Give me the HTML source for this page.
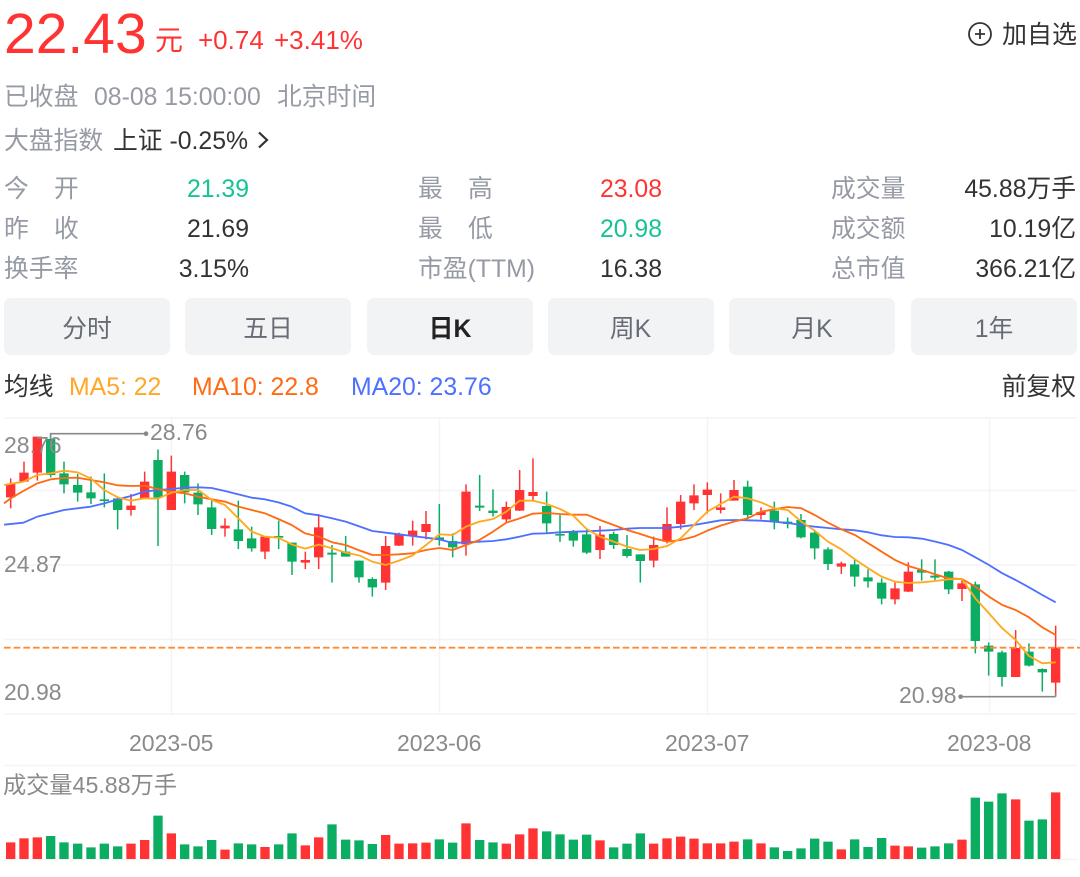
<!DOCTYPE html>
<html lang="zh-CN"><head><meta charset="utf-8"><title>22.43</title>
<style>
html,body{margin:0;padding:0;background:#fff}
#p{position:relative;width:1080px;height:877px;overflow:hidden;background:#fff;font-family:"Liberation Sans","Noto Sans CJK SC",sans-serif;font-size:24.8px;color:#333;filter:blur(.3px)}
#p span,#p div.b{position:absolute;white-space:pre;line-height:30px;height:30px}
.g{color:#969aa4}.r{color:#ff3333}.t{color:#17c396}
.b{background:#f2f3f5;border-radius:7px;top:298px;height:57px!important;line-height:63.5px!important;width:166px;text-align:center;color:#666b75}
.x{font-size:23px;color:#8a8a8a}
svg{position:absolute;left:0;top:0}
</style></head><body><div id="p">
<svg width="1080" height="877" viewBox="0 0 1080 877" fill="none">
<g stroke="#f4f4f5" stroke-width="1.5">
<path d="M4 418H1077M4 490.5H1077M4 565H1077M4 639.5H1077M4 714H1077M4 765.5H1077M4 859.5H1077"/>
<path d="M171.5 418V714M439.5 418V714M707.5 418V714M989.5 418V714"/>
</g>
<g transform="translate(0 410) scale(.33333)">
<path stroke="#ff3333" stroke-width="4.5" d="M32 205V295M72 155V215M112 80V212M393 252V317M434 185V265M514 137V300M675 325V380M795 380V447M916 425V477M956 312V477M1157 378V540M1197 368V408M1238 332V407M1278 303V388M1398 223V437M1519 275V338M1559 180V303M1599 145V272M1800 348V447M1961 380V472M2001 292V400M2042 255V358M2082 223V300M2122 217V310M2162 250V310M2202 210V272M2283 292V328M2524 455V492M2685 518V583M2725 457V546M2886 510V573M3047 660V801M3167 647V860"/>
<path stroke="#ff3333" stroke-width="28" d="M32 222V262M72 188V215M112 80V188M393 287V300M434 215V265M514 185V300M675 347V355M795 380V425M916 450V458M956 352V442M1157 408V518M1197 372V407M1238 362V378M1278 342V366M1398 245V403M1519 291V328M1559 240V302M1599 246V258M1800 374V420M1961 405V452M2001 342V395M2042 275V342M2082 256V280M2122 239V255M2162 292V300M2202 240V272M2283 306V315M2524 460V470M2685 535V568M2725 485V545M2886 520V537M3047 714V801M3167 713V818"/>
<path stroke="#0bad62" stroke-width="4.5" d="M152 70V202M192 155V250M233 192V275M273 200V282M313 190V292M353 260V358M474 118V408M554 185V280M594 220V315M635 270V375M715 272V417M755 350V425M836 332V417M876 398V495M996 405V518M1037 378V440M1077 452V518M1117 502V560M1318 282V407M1358 370V442M1439 195V303M1479 238V320M1640 245V370M1680 315V396M1720 360V410M1760 358V432M1841 365V417M1881 375V443M1921 433V518M2243 212V325M2323 275V358M2363 322V355M2403 312V385M2444 360V448M2484 412V480M2564 450V530M2604 478V533M2645 505V583M2765 448V512M2805 448V510M2846 483V552M2926 515V730M2966 697V797M3006 722V830M3087 700V770M3127 775V845"/>
<path stroke="#0bad62" stroke-width="28" d="M152 87V195M192 190V223M233 225V248M273 247V265M313 268V273M353 265V300M474 150V263M554 195V247M594 248V283M635 292V357M715 358V393M755 385V415M836 378V383M876 398V455M996 428V434M1037 425V440M1077 452V502M1117 507V532M1318 382V390M1358 393V412M1439 287V293M1479 302V309M1640 288V340M1680 372V377M1720 365V392M1760 373V428M1841 372V405M1881 417V438M1921 433V453M2243 230V315M2323 302V335M2363 335V342M2403 330V382M2444 368V415M2484 418V462M2564 463V500M2604 502V514M2645 518V566M2765 480V488M2805 497V503M2846 485V538M2926 523V693M2966 707V725M3006 727V801M3087 725V767M3127 777V787"/>
<path stroke="#ff8a34" stroke-width="5.5" stroke-dasharray="20 9" d="M12 713H3240"/>
<g stroke-width="5.5" stroke-linejoin="round">
<path stroke="#4d70ff" d="M12 344L70 338 112 320 152 310 192 300 232 295 272 290 313 280 353 268 393 258 433 245 473 240 514 237 555 233 595 232 635 234 675 243 715 253 755 263 795 268 835 277 875 290 915 310 957 316 997 325 1037 335 1080 350 1117 363 1157 368 1197 373 1237 378 1278 383 1318 388 1358 399 1398 397 1438 395 1479 393 1519 388 1559 380 1599 371 1640 370 1680 367 1720 365 1760 364 1800 362 1841 360 1881 356 1921 354 1961 354 2002 354 2042 350 2082 345 2122 338 2162 331 2202 330 2243 331 2283 332 2323 335 2363 339 2404 345 2444 350 2484 354 2524 358 2565 361 2605 367 2645 376 2685 381 2725 382 2766 386 2806 395 2846 405 2886 420 2926 442 2967 465 3007 490 3047 510 3087 532 3127 555 3167 577"/>
<path stroke="#ff6a13" d="M12 280L32 265 70 243 112 220 152 208 192 204 232 203 272 210 313 217 353 226 393 228 433 227 473 237 514 245 555 250 595 260 635 268 675 275 715 290 755 300 795 310 835 327 875 345 915 370 957 380 997 397 1037 405 1080 422 1117 435 1157 435 1197 433 1237 430 1278 420 1318 414 1358 420 1398 405 1438 390 1479 365 1519 338 1559 325 1599 311 1640 309 1680 312 1720 314 1760 314 1800 330 1841 345 1881 360 1921 372 1961 385 2002 395 2042 390 2082 380 2122 362 2162 347 2202 335 2243 325 2283 305 2323 298 2363 291 2404 295 2444 315 2484 338 2524 358 2565 375 2605 400 2645 425 2685 450 2725 468 2766 480 2806 493 2846 505 2886 507 2926 530 2967 560 3007 585 3047 600 3087 622 3127 652 3167 675"/>
<path stroke="#ffa91f" d="M12 225L70 215 112 195 152 190 192 182 232 187 272 205 313 240 353 262 393 272 433 265 473 266 514 248 555 240 595 240 635 270 675 285 715 325 755 365 795 380 835 383 875 403 915 416 957 404 997 415 1037 428 1080 437 1117 455 1157 465 1197 452 1237 437 1278 405 1318 373 1358 375 1398 350 1438 335 1479 327 1519 305 1559 272 1599 272 1640 282 1680 297 1720 317 1760 357 1800 380 1841 395 1881 410 1921 420 1961 417 2002 408 2042 385 2082 345 2122 305 2162 282 2202 260 2243 265 2283 277 2323 295 2363 300 2404 335 2444 362 2484 395 2524 418 2565 448 2605 475 2645 500 2685 515 2725 519 2766 517 2806 513 2846 508 2886 507 2926 565 2967 610 3007 655 3047 690 3087 738 3127 760 3167 757"/>
</g>
<path stroke="#888" stroke-width="5" d="M152 86V71H438M3167 860H2882M3167 860V848"/>
<circle cx="438" cy="71" r="7" fill="#888"/><circle cx="2882" cy="860" r="7" fill="#888"/>
</g>
<g transform="translate(0 770) scale(.33333)" stroke-width="28">
<path stroke="#ff3333" d="M32 217V267M72 205V267M112 202V267M393 221V267M434 210V267M514 190V267M675 239V267M795 231V267M916 226V267M956 202V267M1157 195V267M1197 221V267M1238 220V267M1278 218V267M1398 160V267M1519 221V267M1559 193V267M1599 175V267M1800 211V267M1961 221V267M2001 205V267M2042 200V267M2082 206V267M2122 220V267M2162 220V267M2202 215V267M2283 220V267M2524 238V267M2685 227V267M2725 229V267M2886 209V267M3047 88V267M3167 67V267"/>
<path stroke="#0bad62" d="M152 198V267M192 217V267M233 221V267M273 232V267M313 221V267M353 229V267M474 137V267M554 223V267M594 229V267M635 210V267M715 220V267M755 223V267M836 223V267M876 190V267M996 163V267M1037 209V267M1077 211V267M1117 222V267M1318 208V267M1358 218V267M1439 210V267M1479 217V267M1640 184V267M1680 193V267M1720 209V267M1760 194V267M1841 232V267M1881 221V267M1921 190V267M2243 208V267M2323 232V267M2363 243V267M2403 235V267M2444 206V267M2484 215V267M2564 208V267M2604 231V267M2645 204V267M2765 233V267M2805 229V267M2846 220V267M2926 83V267M2966 95V267M3006 70V267M3087 152V267M3127 148V267"/>
</g>
<circle cx="980" cy="34" r="11" stroke="#333" stroke-width="1.8"/>
<path d="M975 34H985M980 29V39" stroke="#333" stroke-width="1.8"/>
<path d="M259 132.5L267 140L259 147.5" stroke="#333" stroke-width="2.2"/>
</svg>

<span class="r" style="left:4px;top:4px;font-size:57px;line-height:60px;height:60px">22.43</span>
<span class="r" style="left:155px;top:26px;font-size:28px">元</span>
<span class="r" style="left:198px;top:25px;font-size:26px">+0.74</span>
<span class="r" style="left:274px;top:25px;font-size:26px">+3.41%</span>
<span style="left:1002px;top:20px;font-size:25px">加自选</span>

<span class="g" style="left:4px;top:83px">已收盘</span>
<span class="g" style="left:94px;top:83px">08-08 15:00:00</span>
<span class="g" style="left:277px;top:83px">北京时间</span>
<span class="g" style="left:4px;top:127px">大盘指数</span>
<span style="left:113px;top:127px">上证 -0.25%</span>

<span class="g" style="left:4px;top:175px">今</span><span class="g" style="left:54px;top:175px">开</span>
<span class="t" style="right:831px;top:175px">21.39</span>
<span class="g" style="left:4px;top:215px">昨</span><span class="g" style="left:54px;top:215px">收</span>
<span style="right:831px;top:215px">21.69</span>
<span class="g" style="left:4px;top:255px">换手率</span>
<span style="right:831px;top:255px">3.15%</span>

<span class="g" style="left:418px;top:175px">最</span><span class="g" style="left:468px;top:175px">高</span>
<span class="r" style="right:418px;top:175px">23.08</span>
<span class="g" style="left:418px;top:215px">最</span><span class="g" style="left:468px;top:215px">低</span>
<span class="t" style="right:418px;top:215px">20.98</span>
<span class="g" style="left:418px;top:255px">市盈(TTM)</span>
<span style="right:418px;top:255px">16.38</span>

<span class="g" style="left:831px;top:175px">成交量</span>
<span style="right:4px;top:175px">45.88万手</span>
<span class="g" style="left:831px;top:215px">成交额</span>
<span style="right:4px;top:215px">10.19亿</span>
<span class="g" style="left:831px;top:255px">总市值</span>
<span style="right:4px;top:255px">366.21亿</span>

<div class="b" style="left:4px">分时</div>
<div class="b" style="left:185px">五日</div>
<div class="b" style="left:367px;color:#222;font-weight:700">日K</div>
<div class="b" style="left:547.5px">周K</div>
<div class="b" style="left:729px">月K</div>
<div class="b" style="left:911px">1年</div>

<span style="left:4px;top:373px">均线</span>
<span style="left:69px;top:373px;color:#ffa726">MA5: 22</span>
<span style="left:192px;top:373px;color:#ff6a13">MA10: 22.8</span>
<span style="left:351px;top:373px;color:#4d70ff">MA20: 23.76</span>
<span style="right:4px;top:373px">前复权</span>

<span class="x" style="left:4px;top:430px">28.76</span>
<span class="x" style="left:150px;top:417px">28.76</span>
<span class="x" style="left:4px;top:549px">24.87</span>
<span class="x" style="left:4px;top:677px">20.98</span>
<span class="x" style="left:899px;top:680px">20.98</span>
<span class="x" style="left:129px;top:728px">2023-05</span>
<span class="x" style="left:397px;top:728px">2023-06</span>
<span class="x" style="left:665px;top:728px">2023-07</span>
<span class="x" style="left:947px;top:728px">2023-08</span>
<span class="x" style="left:3px;top:770px;font-size:23.2px">成交量45.88万手</span>
</div></body></html>
